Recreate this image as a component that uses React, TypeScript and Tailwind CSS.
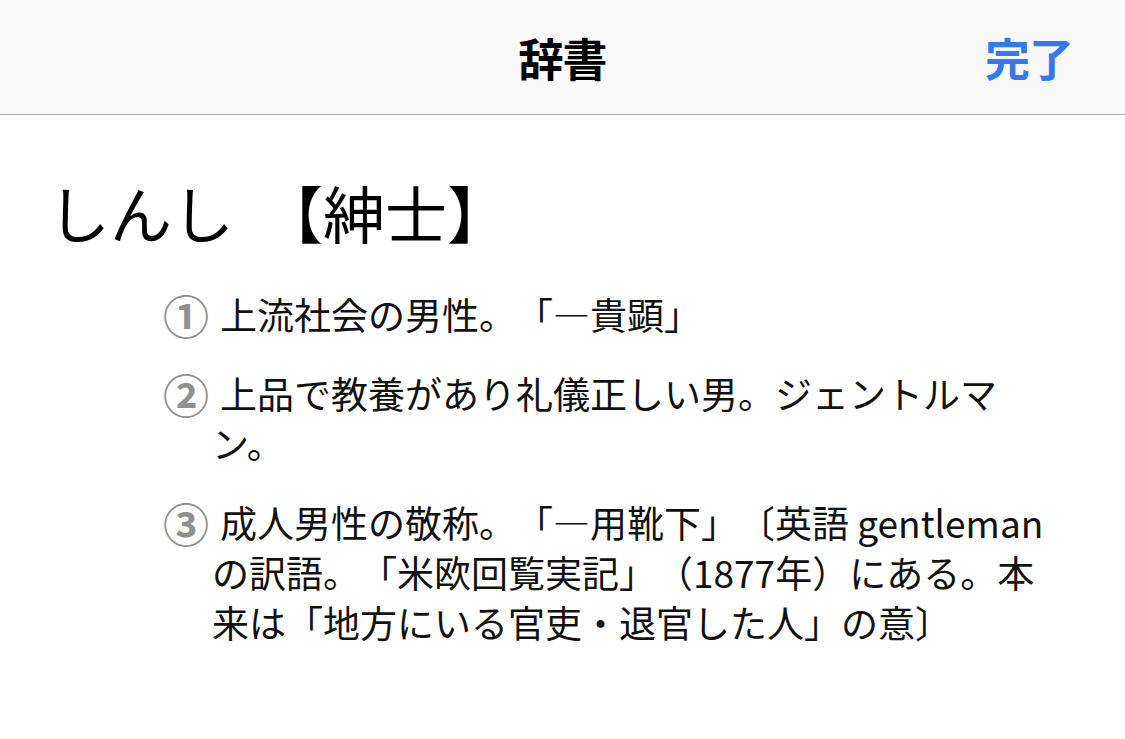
import React from "react";

const defs: { n: string; text: string }[] = [
  { n: "①", text: "上流社会の男性。「―貴顕」" },
  { n: "②", text: "上品で教養があり礼儀正しい男。ジェントルマン。" },
  {
    n: "③",
    text: "成人男性の敬称。「―用靴下」〔英語 gentleman の訳語。「米欧回覧実記」（1877年）にある。本来は「地方にいる官吏・退官した人」の意〕",
  },
];

export default function App() {
  return (
    <div
      className="w-[1125px] h-[739px] bg-white text-black overflow-hidden [text-spacing-trim:space-all]"
      style={{ fontFamily: '"Noto Sans CJK JP", "Noto Sans", sans-serif' }}
    >
      <header className="h-[115px] bg-[#f9f9f9] border-b border-[#a9a9a9] grid grid-cols-[1fr_auto_1fr] items-center">
        <div />
        <h1 className="text-[45px] font-bold leading-none tracking-[-1px]">辞書</h1>
        <div className="flex justify-end pr-[52px]">
          <button className="text-[45px] font-semibold leading-none text-[#3478f0] tracking-[-1px]">
            完了
          </button>
        </div>
      </header>
      <main className="pt-[60px]">
        <h2 className="pl-[48px] text-[62px] leading-[74px] font-normal [word-spacing:13px]">しんし 【紳士】</h2>
        <div className="mt-[40px] flex flex-col gap-[29px]">
          {defs.map((d) => (
            <p
              key={d.n}
              className="pl-[212px] pr-[58px] -indent-[44px] text-[37px] leading-[50px] text-[#111]"
            >
              <span className="inline-block w-[52px] indent-0 text-[46px] leading-[50px] font-bold text-[#8f8f8f] -translate-x-[5px] align-top">
                {d.n}
              </span>
              {d.text}
            </p>
          ))}
        </div>
      </main>
    </div>
  );
}
